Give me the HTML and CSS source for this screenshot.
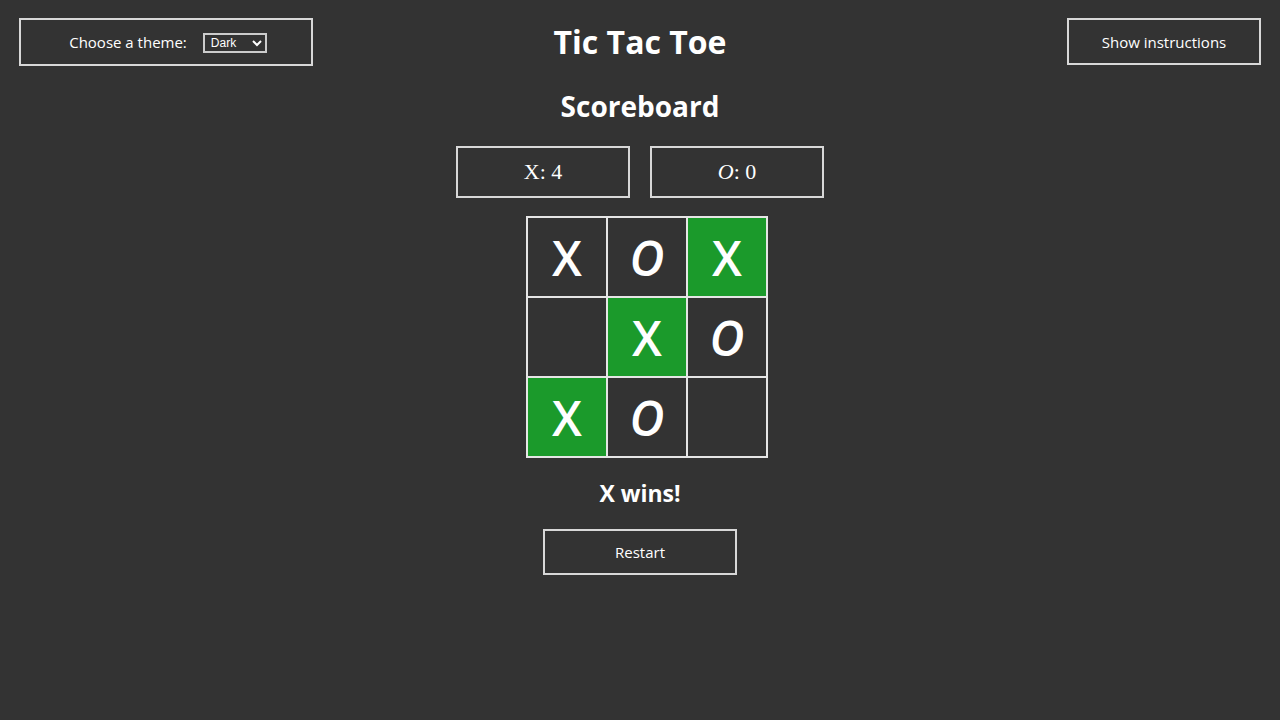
FILE: index.html
```html
<!DOCTYPE html>
<html lang="en">
<head>
<meta charset="utf-8">
<title>Tic Tac Toe</title>
<link rel="stylesheet" href="styles.css">
</head>
<body>
<header class="top">
  <div class="theme-box">
    <label class="theme-label" for="theme">Choose a theme:</label>
    <select id="theme" class="theme-select">
      <option>Dark</option>
      <option>Light</option>
    </select>
  </div>
  <h1 class="title">Tic Tac Toe</h1>
  <button class="btn instr">Show instructions</button>
</header>
<main class="main">
  <h2 class="scoreboard">Scoreboard</h2>
  <div class="scores">
    <div class="score">X: 4</div>
    <div class="score"><i>O</i>: 0</div>
  </div>
  <div class="board">
    <div class="cell">X</div>
    <div class="cell o">O</div>
    <div class="cell win">X</div>
    <div class="cell"></div>
    <div class="cell win">X</div>
    <div class="cell o">O</div>
    <div class="cell win">X</div>
    <div class="cell o">O</div>
    <div class="cell"></div>
  </div>
  <p class="status">X wins!</p>
  <button class="btn restart">Restart</button>
</main>
</body>
</html>
```
FILE: styles.css
```css
html, body {
  margin: 0;
  padding: 0;
  background: #333333;
  color: #ffffff;
  font-family: "Open Sans", "Lato", sans-serif;
  height: 100%;
}
.top {
  display: grid;
  grid-template-columns: 1fr auto 1fr;
  align-items: start;
  padding: 18px 19px 0 19px;
}
.theme-box {
  justify-self: start;
  width: 286px;
  height: 44px;
  padding-left: 4px;
  border: 2px solid #d8d8d8;
  display: flex;
  align-items: center;
  justify-content: center;
  gap: 16px;
  font-size: 15px;
}
.theme-label {
  color: #fff;
}
.theme-select {
  width: 64px;
  height: 20px;
  font-size: 12px;
  font-family: "Liberation Sans", sans-serif;
  background: #333;
  color: #fff;
  border: 2px solid #ccc;
  padding: 0 2px;
  margin: 1px 0 0 0;
}
.title {
  margin: 3px 0 0 0;
  font-size: 32px;
  font-weight: 700;
  text-align: center;
  line-height: 42px;
}
.btn {
  background: #333;
  color: #fff;
  border: 2px solid #d8d8d8;
  font-family: "Open Sans", "Lato", sans-serif;
  font-size: 15px;
  cursor: pointer;
}
.instr {
  justify-self: end;
  width: 194px;
  height: 47px;
}
.main {
  display: flex;
  flex-direction: column;
  align-items: center;
}
.scoreboard {
  margin: 20px 0 0 0;
  font-size: 28px;
  font-weight: 700;
  line-height: 40px;
}
.scores {
  display: flex;
  gap: 20px;
  margin-top: 20px;
}
.score {
  width: 170px;
  height: 48px;
  border: 2px solid #d8d8d8;
  display: flex;
  align-items: center;
  justify-content: center;
  font-family: "Liberation Serif", serif;
  font-size: 22px;
}
.board {
  margin-top: 18px;
  margin-left: 14px;
  display: grid;
  grid-template-columns: repeat(3, 78px);
  grid-template-rows: repeat(3, 78px);
  gap: 2px;
  padding: 2px;
  background: #e6e6e6;
}
.cell {
  background: #333;
  display: flex;
  align-items: center;
  justify-content: center;
  font-family: "Open Sans", sans-serif;
  font-size: 48px;
  font-weight: 600;
  color: #fff;
}
.cell.o {
  font-style: italic;
}
.cell.win {
  background: #1b9a2b;
}
.status {
  margin: 21px 0 0 0;
  font-size: 23px;
  font-weight: 700;
  line-height: 28px;
}
.restart {
  margin-top: 22px;
  width: 194px;
  height: 46px;
}
```
